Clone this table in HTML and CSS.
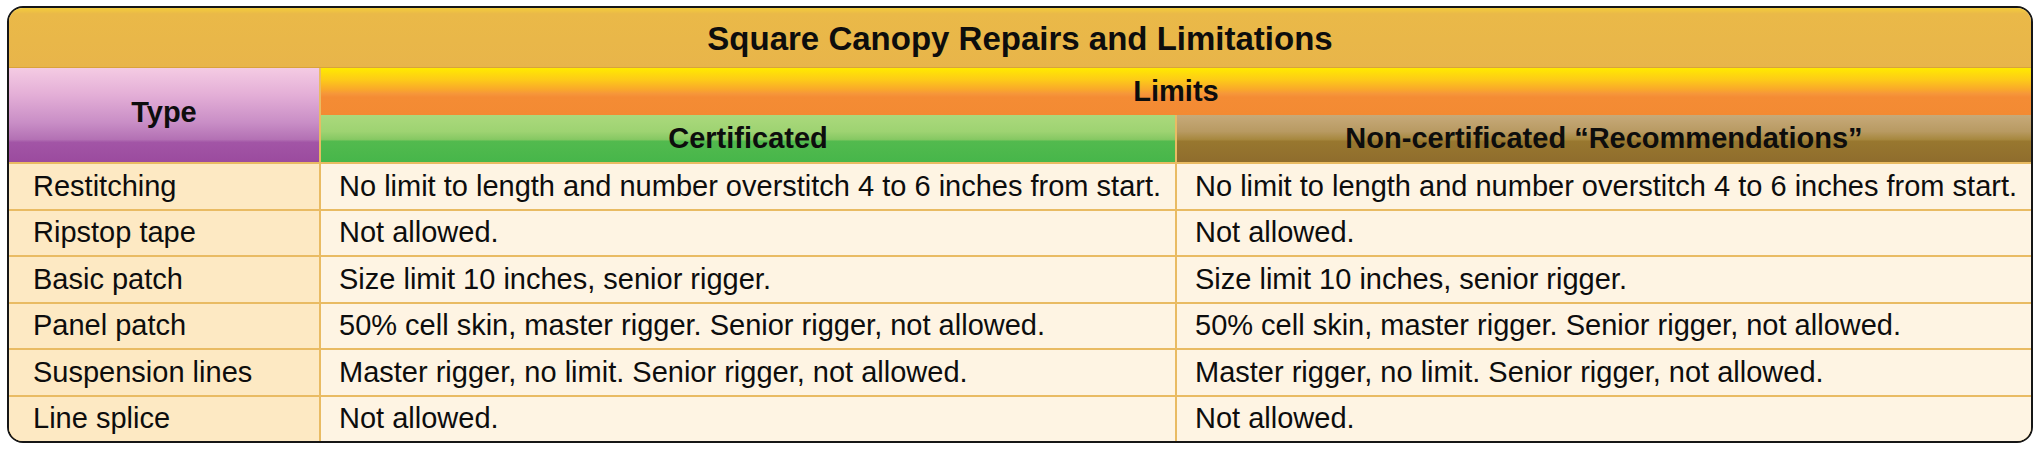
FILE: index.html
```html
<!DOCTYPE html>
<html lang="en">
<head>
<meta charset="utf-8">
<title>Square Canopy Repairs and Limitations</title>
<link rel="stylesheet" href="styles.css">
</head>
<body>
<div class="frame">
  <div class="title">Square Canopy Repairs and Limitations</div>
  <div class="grid">
    <div class="h h-type">Type</div>
    <div class="h h-limits">Limits</div>
    <div class="h h-cert">Certificated</div>
    <div class="h h-non">Non-certificated “Recommendations”</div>

    <div class="c c-type">Restitching</div>
    <div class="c">No limit to length and number overstitch 4 to 6 inches from start.</div>
    <div class="c">No limit to length and number overstitch 4 to 6 inches from start.</div>

    <div class="c c-type">Ripstop tape</div>
    <div class="c">Not allowed.</div>
    <div class="c">Not allowed.</div>

    <div class="c c-type">Basic patch</div>
    <div class="c">Size limit 10 inches, senior rigger.</div>
    <div class="c">Size limit 10 inches, senior rigger.</div>

    <div class="c c-type">Panel patch</div>
    <div class="c">50% cell skin, master rigger. Senior rigger, not allowed.</div>
    <div class="c">50% cell skin, master rigger. Senior rigger, not allowed.</div>

    <div class="c c-type">Suspension lines</div>
    <div class="c">Master rigger, no limit. Senior rigger, not allowed.</div>
    <div class="c">Master rigger, no limit. Senior rigger, not allowed.</div>

    <div class="c c-type">Line splice</div>
    <div class="c">Not allowed.</div>
    <div class="c">Not allowed.</div>
  </div>
</div>
</body>
</html>
```

FILE: styles.css
```css
* { box-sizing: border-box; }

html, body {
  margin: 0;
  padding: 0;
  background: #ffffff;
}

body {
  font-family: "Liberation Sans", Arial, Helvetica, sans-serif;
  color: #0d0d0d;
}

.frame {
  margin: 6px 7px 0 7px;
  width: 2026px;
  border: 2px solid #161616;
  border-radius: 16px;
  overflow: hidden;
  background: #FEF4E3;
}

.title {
  height: 60px;
  display: flex;
  align-items: center;
  justify-content: center;
  font-weight: bold;
  font-size: 33px;
  padding-top: 2px;
  background: linear-gradient(180deg, #F3CC3C 0%, #EAB948 10%, #E8B54A 100%);
  border-bottom: 1px solid #D9A33A;
}

.grid {
  display: grid;
  grid-template-columns: 310px 1fr 1fr;
  grid-template-rows: 47px 47px repeat(6, 46.5px);
  column-gap: 2px;
  background: #E9BB63;
}

.h {
  display: flex;
  align-items: center;
  justify-content: center;
  font-weight: bold;
  font-size: 29px;
}

.h-type {
  grid-row: 1 / 3;
  grid-column: 1;
  padding-bottom: 6px;
  background: linear-gradient(180deg, #F4CBE3 0%, #E4AFD7 28%, #C98EC6 58%, #B371B4 76%, #A255A6 79%, #9B4B9E 100%);
}

.h-limits {
  grid-row: 1;
  grid-column: 2 / 4;
  background: linear-gradient(180deg, #FFEA00 0%, #FDCB18 25%, #F9A92A 45%, #F6963A 55%, #F48C34 62%, #F38A33 100%);
}

.h-cert {
  grid-row: 2;
  grid-column: 2;
  background: linear-gradient(180deg, #ABD97C 0%, #9ED372 35%, #86C863 52%, #52BA4E 56%, #47B64A 100%);
}

.h-non {
  grid-row: 2;
  grid-column: 3;
  background: linear-gradient(180deg, #C7AA7A 0%, #B89A62 35%, #A7883F 52%, #98772F 56%, #8F6D2D 100%);
}

.c {
  display: flex;
  align-items: center;
  border-top: 2px solid #E9BB63;
  background: #FEF4E3;
  font-size: 29px;
  padding-left: 18px;
  white-space: nowrap;
}

.c-type {
  background: #FDE9C3;
  padding-left: 24px;
}
```
